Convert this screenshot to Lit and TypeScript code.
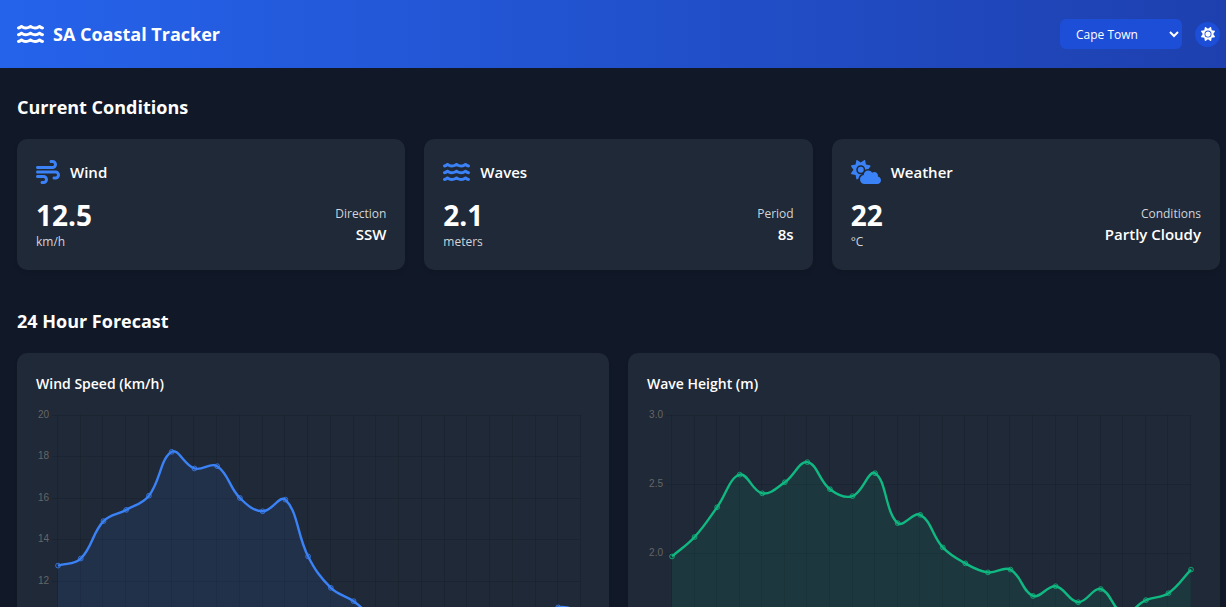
import { LitElement, html, svg, css } from "lit";
import { customElement, property, state } from "lit/decorators.js";

type IconName = "water" | "wind" | "cloudSun" | "sun";

const WAVE =
  "M269.5 69.9c11.1-7.9 25.9-7.9 37 0C329 85.4 356.5 96 384 96c26.9 0 55.4-10.8 77.4-26.1c11.9-8.5 28.1-7.8 39.2 1.7c14.4 11.9 32.5 21 50.6 25.2c17.2 4 27.9 21.2 23.9 38.4s-21.2 27.9-38.4 23.9c-24.5-5.7-44.9-16.5-58.2-25C449.5 149.7 417 160 384 160c-31.9 0-60.6-9.9-80.4-18.9c-5.8-2.7-11.1-5.3-15.6-7.7c-4.5 2.4-9.7 5.1-15.6 7.7c-19.8 9-48.5 18.9-80.4 18.9c-33 0-65.5-10.3-94.5-25.8c-13.4 8.4-33.7 19.3-58.2 25c-17.2 4-34.4-6.7-38.4-23.9s6.7-34.4 23.9-38.4C42.8 92.6 61 83.5 75.3 71.6c11.1-9.5 27.3-10.1 39.2-1.7C136.7 85.2 165.1 96 192 96c27.5 0 55-10.6 77.5-26.1z";

const ICONS: Record<IconName, { width: number; body: unknown }> = {
  water: {
    width: 576,
    body: [0, 144, 288].map((dy) => svg`<path transform="translate(0 ${dy})" d=${WAVE} />`),
  },
  wind: {
    width: 512,
    body: svg`<path d="M288 32c0 17.7 14.3 32 32 32h32c17.7 0 32 14.3 32 32s-14.3 32-32 32H32c-17.7 0-32 14.3-32 32s14.3 32 32 32H352c53 0 96-43 96-96s-43-96-96-96H320c-17.7 0-32 14.3-32 32zm64 352c0 17.7 14.3 32 32 32h32c53 0 96-43 96-96s-43-96-96-96H32c-17.7 0-32 14.3-32 32s14.3 32 32 32H416c17.7 0 32 14.3 32 32s-14.3 32-32 32H384c-17.7 0-32 14.3-32 32zM128 512h32c53 0 96-43 96-96s-43-96-96-96H32c-17.7 0-32 14.3-32 32s14.3 32 32 32H160c17.7 0 32 14.3 32 32s-14.3 32-32 32H128c-17.7 0-32 14.3-32 32s14.3 32 32 32z" />`,
  },
  cloudSun: {
    width: 640,
    body: svg`<path d="M294.2 1.2c5.1 2.1 8.7 6.7 9.6 12.1l14.1 84.7 84.7 14.1c5.4 .9 10 4.5 12.1 9.6s1.5 10.9-1.6 15.4l-38.5 55c-2.2-.1-4.4-.2-6.7-.2c-23.3 0-45.1 6.2-64 17.1l0-1.1c0-53-43-96-96-96s-96 43-96 96s43 96 96 96c8.1 0 15.9-1 23.4-2.9c-36.6 18.1-63.3 53.1-69.8 94.9l-24.4 17c-4.5 3.2-10.3 3.8-15.4 1.6s-8.7-6.7-9.6-12.1L98.1 317.9 13.4 303.8c-5.4-.9-10-4.5-12.1-9.6s-1.5-10.9 1.6-15.4L52.5 208 2.9 137.2c-3.2-4.5-3.8-10.3-1.6-15.4s6.7-8.7 12.1-9.6L98.1 98.1l14.1-84.7c.9-5.4 4.5-10 9.6-12.1s10.9-1.5 15.4 1.6L208 52.5 278.8 2.9c4.5-3.2 10.3-3.8 15.4-1.6zM144 208a64 64 0 1 1 128 0 64 64 0 1 1 -128 0zM639.9 431.9c0 44.2-35.8 80-80 80l-271.9 0c-53 0-96-43-96-96c0-47.6 34.6-87 80-94.6l0-1.3c0-53 43-96 96-96c34.9 0 65.4 18.6 82.2 46.4c13-9.1 28.8-14.4 45.8-14.4c44.2 0 80 35.8 80 80c0 5.9-.6 11.7-1.9 17.2c37.4 6.7 65.8 39.4 65.8 78.7z" />`,
  },
  sun: {
    width: 512,
    body: svg`<path d="M361.5 1.2c5 2.1 8.6 6.6 9.6 11.9L391 121l107.9 19.8c5.3 1 9.8 4.6 11.9 9.6s1.5 10.7-1.6 15.2L446.9 256l62.3 90.3c3.1 4.5 3.7 10.2 1.6 15.2s-6.6 8.6-11.9 9.6L391 391 371.1 498.9c-1 5.3-4.6 9.8-9.6 11.9s-10.7 1.5-15.2-1.6L256 446.9l-90.3 62.3c-4.5 3.1-10.2 3.7-15.2 1.6s-8.6-6.6-9.6-11.9L121 391 13.1 371.1c-5.3-1-9.8-4.6-11.9-9.6s-1.5-10.7 1.6-15.2L65.1 256 2.8 165.7c-3.1-4.5-3.7-10.2-1.6-15.2s6.6-8.6 11.9-9.6L121 121 140.9 13.1c1-5.3 4.6-9.8 9.6-11.9s10.7-1.5 15.2 1.6L256 65.1 346.3 2.8c4.5-3.1 10.2-3.7 15.2-1.6zM160 256a96 96 0 1 1 192 0 96 96 0 1 1 -192 0zm224 0a128 128 0 1 0 -256 0 128 128 0 1 0 256 0z" />`,
  },
};

function icon(name: IconName) {
  const { width, body } = ICONS[name];
  return html`<svg class="icon" viewBox="0 0 ${width} 512" aria-hidden="true">${body}</svg>`;
}

interface Point {
  x: number;
  y: number;
}

/* Chart geometry, in SVG user units. */
const VIEW_WIDTH = 554;
const VIEW_HEIGHT = 252;
const PLOT_TOP = 9;
const PLOT_BOTTOM = 217;
const TENSION = 0.4;

/* Cubic spline through all points; handles follow the neighbours of each point. */
function spline(points: Point[]): string {
  const clamp = (y: number) => Math.min(PLOT_BOTTOM, Math.max(PLOT_TOP, y));
  const handles = points.map((p, i) => {
    const prev = points[i - 1] ?? p;
    const next = points[i + 1] ?? p;
    const d01 = Math.hypot(p.x - prev.x, p.y - prev.y);
    const d12 = Math.hypot(next.x - p.x, next.y - p.y);
    const a = (TENSION * d01) / (d01 + d12);
    const b = (TENSION * d12) / (d01 + d12);
    const dx = next.x - prev.x;
    const dy = next.y - prev.y;
    return {
      before: { x: p.x - a * dx, y: clamp(p.y - a * dy) },
      after: { x: p.x + b * dx, y: clamp(p.y + b * dy) },
    };
  });
  let d = `M${points[0].x} ${points[0].y}`;
  for (let i = 1; i < points.length; i++) {
    const c1 = handles[i - 1].after;
    const c2 = handles[i].before;
    d += `C${c1.x} ${c1.y} ${c2.x} ${c2.y} ${points[i].x} ${points[i].y}`;
  }
  return d;
}

@customElement("line-chart")
export class LineChart extends LitElement {
  @property({ attribute: false }) values: number[] = [];
  @property({ attribute: false }) ticks: string[] = [];
  @property() color = "#3b82f6";
  @property() label = "";
  @property({ type: Number }) left = 22;
  @property({ type: Number }) right = 545;

  static styles = css`
    :host {
      display: block;
    }
    .chart {
      display: block;
      width: 100%;
      height: auto;
      overflow: visible;
    }
    .grid {
      stroke: rgba(0, 0, 0, 0.1);
      stroke-width: 1;
    }
    .tick {
      fill: #666;
      font-family: "Liberation Sans", Arial, sans-serif;
      font-size: 10px;
      text-anchor: end;
    }
    .area {
      fill-opacity: 0.1;
    }
    .line {
      fill: none;
      stroke-width: 2.4;
    }
    .dot {
      fill-opacity: 0.1;
      stroke-width: 0.8;
    }
  `;

  render() {
    const { left, right, ticks, values, color } = this;
    const max = Number(ticks[0]);
    const min = Number(ticks[ticks.length - 1]);
    const step = (right - left) / (values.length - 1);
    const yOf = (v: number) => PLOT_TOP + ((max - v) / (max - min)) * (PLOT_BOTTOM - PLOT_TOP);
    const points = values.map((v, i) => ({ x: left + i * step, y: yOf(v) }));
    const path = spline(points);

    return html`
      <svg class="chart" viewBox="0 0 ${VIEW_WIDTH} ${VIEW_HEIGHT}" role="img" aria-label=${this.label}>
        ${points.map(({ x }) => {
          const gx = Math.round(x) - 0.5;
          return svg`<line class="grid" x1=${gx} x2=${gx} y1=${PLOT_TOP} y2=${PLOT_BOTTOM + 6} />`;
        })}
        ${ticks.map((t) => {
          const gy = Math.floor(yOf(Number(t))) + 0.5;
          return svg`
            <line class="grid" x1=${left - 6} x2=${right} y1=${gy} y2=${gy} />
            <text class="tick" x=${left - 9} y=${gy + 2.5}>${t}</text>`;
        })}
        <path class="area" fill=${color} d="${path}L${right} ${PLOT_BOTTOM}L${left} ${PLOT_BOTTOM}Z" />
        <path class="line" stroke=${color} d=${path} />
        ${points.map(({ x, y }) => svg`<circle class="dot" cx=${x} cy=${y} r="2.4" fill=${color} stroke=${color} />`)}
      </svg>
    `;
  }
}

interface Condition {
  icon: IconName;
  title: string;
  value: string;
  unit: string;
  detailLabel: string;
  detail: string;
}

const CONDITIONS: Condition[] = [
  { icon: "wind", title: "Wind", value: "12.5", unit: "km/h", detailLabel: "Direction", detail: "SSW" },
  { icon: "water", title: "Waves", value: "2.1", unit: "meters", detailLabel: "Period", detail: "8s" },
  { icon: "cloudSun", title: "Weather", value: "22", unit: "°C", detailLabel: "Conditions", detail: "Partly Cloudy" },
];

const WIND = [
  12.76, 13.1, 14.9, 15.44, 16.12, 18.23, 17.43, 17.54, 16.01, 15.37, 15.93, 13.2,
  11.69, 11.05, 10.2, 10.1, 10.3, 10.15, 10.25, 10.1, 10.2, 10.15, 10.75, 10.6,
];

const WAVES = [
  1.98, 2.12, 2.335, 2.57, 2.435, 2.515, 2.66, 2.465, 2.415, 2.58, 2.22, 2.28,
  2.045, 1.93, 1.865, 1.885, 1.695, 1.765, 1.65, 1.745, 1.57, 1.665, 1.715, 1.885,
];

const TOWNS = ["Cape Town", "Durban", "Port Elizabeth", "East London"];

@customElement("app-root")
export class AppRoot extends LitElement {
  @state() private town = TOWNS[0];

  static styles = css`
    :host {
      display: block;
      min-height: 100vh;
      background: #111827;
      color: #fff;
      font-family: "Segoe UI", "Open Sans", "Noto Sans", sans-serif;
      font-size: 12px;
      line-height: 18px;
    }
    * {
      box-sizing: border-box;
    }
    h1,
    h2,
    h3,
    p {
      margin: 0;
    }
    .icon {
      display: block;
      height: 24px;
      fill: currentColor;
    }
    .topbar {
      display: flex;
      align-items: center;
      justify-content: space-between;
      height: 68px;
      padding: 0 6px 0 17px;
      background: linear-gradient(to right, #2563eb, #1e40af);
    }
    .brand,
    .controls,
    .card-head {
      display: flex;
      align-items: center;
    }
    .brand {
      gap: 9px;
    }
    .brand h1 {
      font-size: 18px;
      line-height: 26px;
      font-weight: 700;
    }
    .controls {
      gap: 13px;
    }
    .town {
      width: 122px;
      height: 30px;
      padding: 0 0 0 12px;
      border: 0;
      border-radius: 6px;
      background-color: #1d4ed8;
      color: #fff;
      font: inherit;
    }
    .theme {
      display: grid;
      place-items: center;
      width: 25px;
      height: 25px;
      padding: 0;
      border: 0;
      border-radius: 50%;
      background: #1d4ed8;
      color: #fff;
    }
    .theme .icon {
      height: 14px;
    }
    .page {
      display: grid;
      gap: 38px;
      padding: 26px 6px 26px 17px;
    }
    .section {
      display: grid;
      gap: 19px;
    }
    .section h2 {
      font-size: 18px;
      line-height: 26px;
      font-weight: 700;
    }
    .cards,
    .charts {
      display: grid;
      grid-template-columns: repeat(3, minmax(0, 1fr));
      gap: 19px;
    }
    .charts {
      grid-template-columns: repeat(2, minmax(0, 1fr));
    }
    .card {
      padding: 19px;
      border-radius: 10px;
      background: #1f2937;
      box-shadow: 0 3px 5px -1px rgba(0, 0, 0, 0.1);
    }
    .card-head {
      gap: 10px;
      height: 27px;
      margin-bottom: 13px;
    }
    .card-head .icon {
      color: #3b82f6;
    }
    .card-head h3 {
      font-size: 15px;
      line-height: 24px;
      font-weight: 600;
    }
    .reading {
      display: flex;
      align-items: center;
      justify-content: space-between;
    }
    .value {
      font-size: 28px;
      line-height: 35px;
      font-weight: 700;
    }
    .muted {
      color: #d1d5db;
    }
    .detail {
      text-align: right;
    }
    .detail-value {
      font-size: 15px;
      line-height: 22px;
      font-weight: 600;
    }
    .chart-title {
      margin-bottom: 10px;
      font-size: 14px;
      line-height: 24px;
      font-weight: 600;
    }
  `;

  private pickTown(e: Event) {
    this.town = (e.target as HTMLSelectElement).value;
  }

  render() {
    return html`
      <header class="topbar">
        <div class="brand">${icon("water")}<h1>SA Coastal Tracker</h1></div>
        <div class="controls">
          <select class="town" aria-label="Location" @change=${this.pickTown}>
            ${TOWNS.map((t) => html`<option value=${t} ?selected=${t === this.town}>${t}</option>`)}
          </select>
          <button class="theme" type="button" aria-label="Toggle theme">${icon("sun")}</button>
        </div>
      </header>
      <main class="page">
        <section class="section">
          <h2>Current Conditions</h2>
          <div class="cards">
            ${CONDITIONS.map(
              (c) => html`
                <article class="card">
                  <div class="card-head">${icon(c.icon)}<h3>${c.title}</h3></div>
                  <div class="reading">
                    <div>
                      <p class="value">${c.value}</p>
                      <p class="muted">${c.unit}</p>
                    </div>
                    <div class="detail">
                      <p class="muted">${c.detailLabel}</p>
                      <p class="detail-value">${c.detail}</p>
                    </div>
                  </div>
                </article>
              `
            )}
          </div>
        </section>
        <section class="section">
          <h2>24 Hour Forecast</h2>
          <div class="charts">
            <article class="card">
              <h3 class="chart-title">Wind Speed (km/h)</h3>
              <line-chart
                label="Wind speed over 24 hours"
                color="#3b82f6"
                .left=${22}
                .right=${545}
                .values=${WIND}
                .ticks=${["20", "18", "16", "14", "12", "10"]}
              ></line-chart>
            </article>
            <article class="card">
              <h3 class="chart-title">Wave Height (m)</h3>
              <line-chart
                label="Wave height over 24 hours"
                color="#10b981"
                .left=${25}
                .right=${544}
                .values=${WAVES}
                .ticks=${["3.0", "2.5", "2.0", "1.5"]}
              ></line-chart>
            </article>
          </div>
        </section>
      </main>
    `;
  }
}
